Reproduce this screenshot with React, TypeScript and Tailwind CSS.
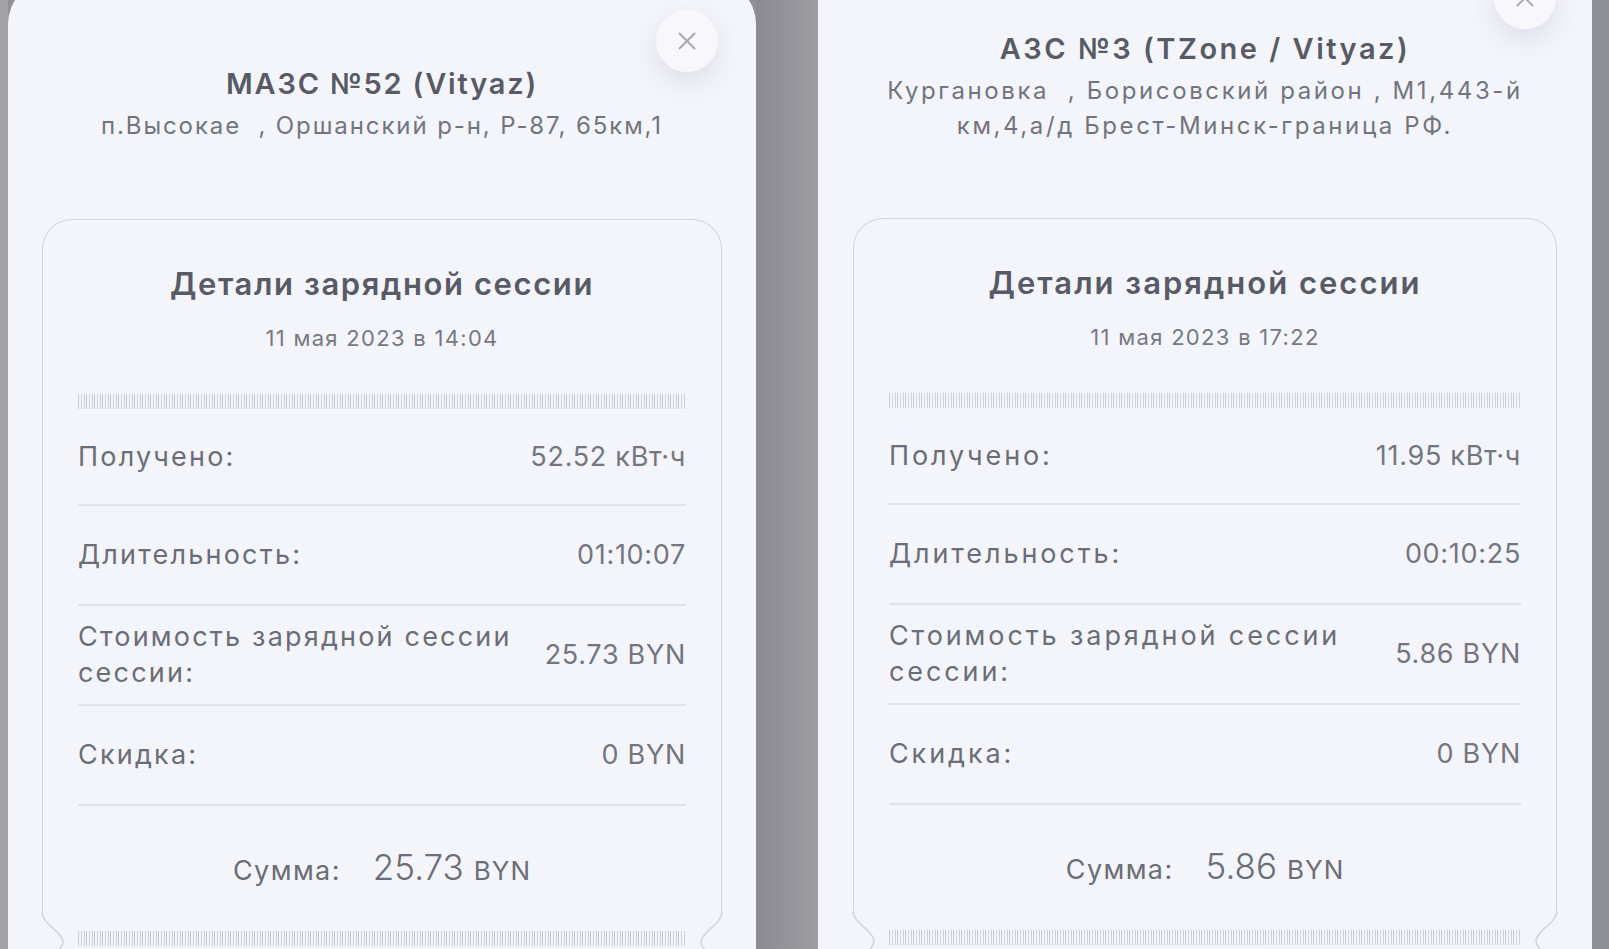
import { X } from "lucide-react";

type Row = { label: string[]; value: string };

type Session = {
  title: string;
  address: string[];
  date: string;
  rows: Row[];
  sum: string;
  wide: boolean;
  panel: string;
  close: string;
  header: string;
  card: string;
};

const sessions: Session[] = [
  {
    title: "МАЗС №52 (Vityaz)",
    address: ["п.Высокае  , Оршанский р-н, Р-87, 65км,1"],
    date: "11 мая 2023 в 14:04",
    rows: [
      { label: ["Получено:"], value: "52.52 кВт·ч" },
      { label: ["Длительность:"], value: "01:10:07" },
      { label: ["Стоимость зарядной сессии", "сессии:"], value: "25.73 BYN" },
      { label: ["Скидка:"], value: "0 BYN" },
    ],
    sum: "25.73",
    wide: false,
    panel: "w-[748px] mt-[-20px] px-[34px]",
    close: "top-[30px] right-[38px]",
    header: "pt-[86px] h-[239px]",
    card: "w-[680px]",
  },
  {
    title: "АЗС №3 (TZone / Vityaz)",
    address: ["Кургановка  , Борисовский район , М1,443-й", "км,4,а/д Брест-Минск-граница РФ."],
    date: "11 мая 2023 в 17:22",
    rows: [
      { label: ["Получено:"], value: "11.95 кВт·ч" },
      { label: ["Длительность:"], value: "00:10:25" },
      { label: ["Стоимость зарядной сессии", "сессии:"], value: "5.86 BYN" },
      { label: ["Скидка:"], value: "0 BYN" },
    ],
    sum: "5.86",
    wide: true,
    panel: "w-[774px] mt-[-60px] px-[35px]",
    close: "top-[27px] right-[36px]",
    header: "pt-[91px] h-[278px]",
    card: "w-[704px]",
  },
];

function Strip() {
  return (
    <div className="h-[15px] w-full bg-[repeating-linear-gradient(90deg,#c6c7cf_0_1px,#f4f5fb_1px_3px,#d0d1d9_3px_4px,#f4f5fb_4px_6px,#c9cad2_6px_7px,#f4f5fb_7px_8px)] opacity-90" />
  );
}

function Notch({ side }: { side: "left" | "right" }) {
  return (
    <svg
      width="26"
      height="60"
      viewBox="0 0 26 60"
      className={
        side === "left"
          ? "absolute top-[692px] left-[-2px]"
          : "absolute top-[692px] right-[-2px] -scale-x-100"
      }
    >
      <rect x="0" y="0" width="5" height="60" fill="#f4f5fb" />
      <path
        d="M1 0 C1 12 22 20 22 30 C22 40 1 48 1 60"
        fill="#f4f5fb"
        stroke="#d3d4dc"
        strokeWidth="1.5"
      />
    </svg>
  );
}

function Panel({ s }: { s: Session }) {
  return (
    <div className={`relative shrink-0 flex flex-col items-center rounded-t-[44px] bg-[#f4f5fb] ${s.panel}`}>
      <button
        className={`absolute w-[62px] h-[62px] rounded-full bg-[#f8f8fc] shadow-[0_10px_26px_rgba(70,70,110,0.13)] flex items-center justify-center ${s.close}`}
      >
        <X size={30} strokeWidth={1.5} className="text-[#a7a8b2]" />
      </button>

      <div className={`shrink-0 flex flex-col items-center text-center ${s.header}`}>
        <h1
          className={`text-[29px] leading-[36px] font-semibold text-[#585a66] ${
            s.wide ? "tracking-[2.5px]" : "tracking-[1.8px]"
          }`}
        >
          {s.title}
        </h1>
        <p
          className={`mt-[6px] text-[24px] leading-[35px] text-[#72747e] whitespace-pre ${
            s.wide ? "tracking-[2.6px]" : "tracking-[1.9px]"
          }`}
        >
          {s.address.join("\n")}
        </p>
      </div>

      <div className={`relative shrink-0 border-[1.5px] border-b-0 border-[#d3d4dc] rounded-t-[30px] px-[35px] pt-[45px] pb-[40px] ${s.card}`}>
        <Notch side="left" />
        <Notch side="right" />
        <h2
          className={`text-center text-[31px] leading-[38px] font-semibold text-[#585a66] ${
            s.wide ? "tracking-[2px]" : "tracking-[1.6px]"
          }`}
        >
          Детали зарядной сессии
        </h2>
        <p className="mt-[21px] text-center text-[22px] leading-[28px] text-[#777982] tracking-[1.3px]">{s.date}</p>
        <div className="mt-[42px]">
          <Strip />
        </div>
        {s.rows.map((r, i) => (
          <div
            key={r.value + r.label[0]}
            className={`flex items-center justify-between border-b-2 border-[#e1e2e8] text-[27px] text-[#6b6d77] ${
              i === 0 ? "h-[97px]" : "h-[100px]"
            }`}
          >
            <div className={`leading-[36px] ${s.wide ? "tracking-[2.9px]" : "tracking-[2.2px]"}`}>
              {r.label.map((l) => (
                <div key={l}>{l}</div>
              ))}
            </div>
            <div className="leading-[36px] text-[#74767f] tracking-[0.7px]">{r.value}</div>
          </div>
        ))}
        <div className="mt-[35px] h-[44px] flex items-baseline justify-center text-[#6b6d77]">
          <span className="text-[27px] tracking-[1.4px]">Сумма:</span>
          <span className="ml-[32px] text-[35px] font-light">{s.sum}</span>
          <span className="ml-[10px] text-[26px] tracking-[1px]">BYN</span>
        </div>
        <div className="mt-[46px]">
          <Strip />
        </div>
      </div>
    </div>
  );
}

export default function App() {
  return (
    <div className="h-[949px] w-[1609px] overflow-hidden flex bg-[#909196] font-['Inter','Noto_Sans',sans-serif]">
      <div className="w-[8px] shrink-0 bg-[#a2a2a7]" />
      <Panel s={sessions[0]} />
      <div className="w-[62px] shrink-0 bg-gradient-to-r from-[#8a8b91] to-[#9d9da2]" />
      <Panel s={sessions[1]} />
      <div className="flex-1 bg-[#8f9095]" />
    </div>
  );
}
